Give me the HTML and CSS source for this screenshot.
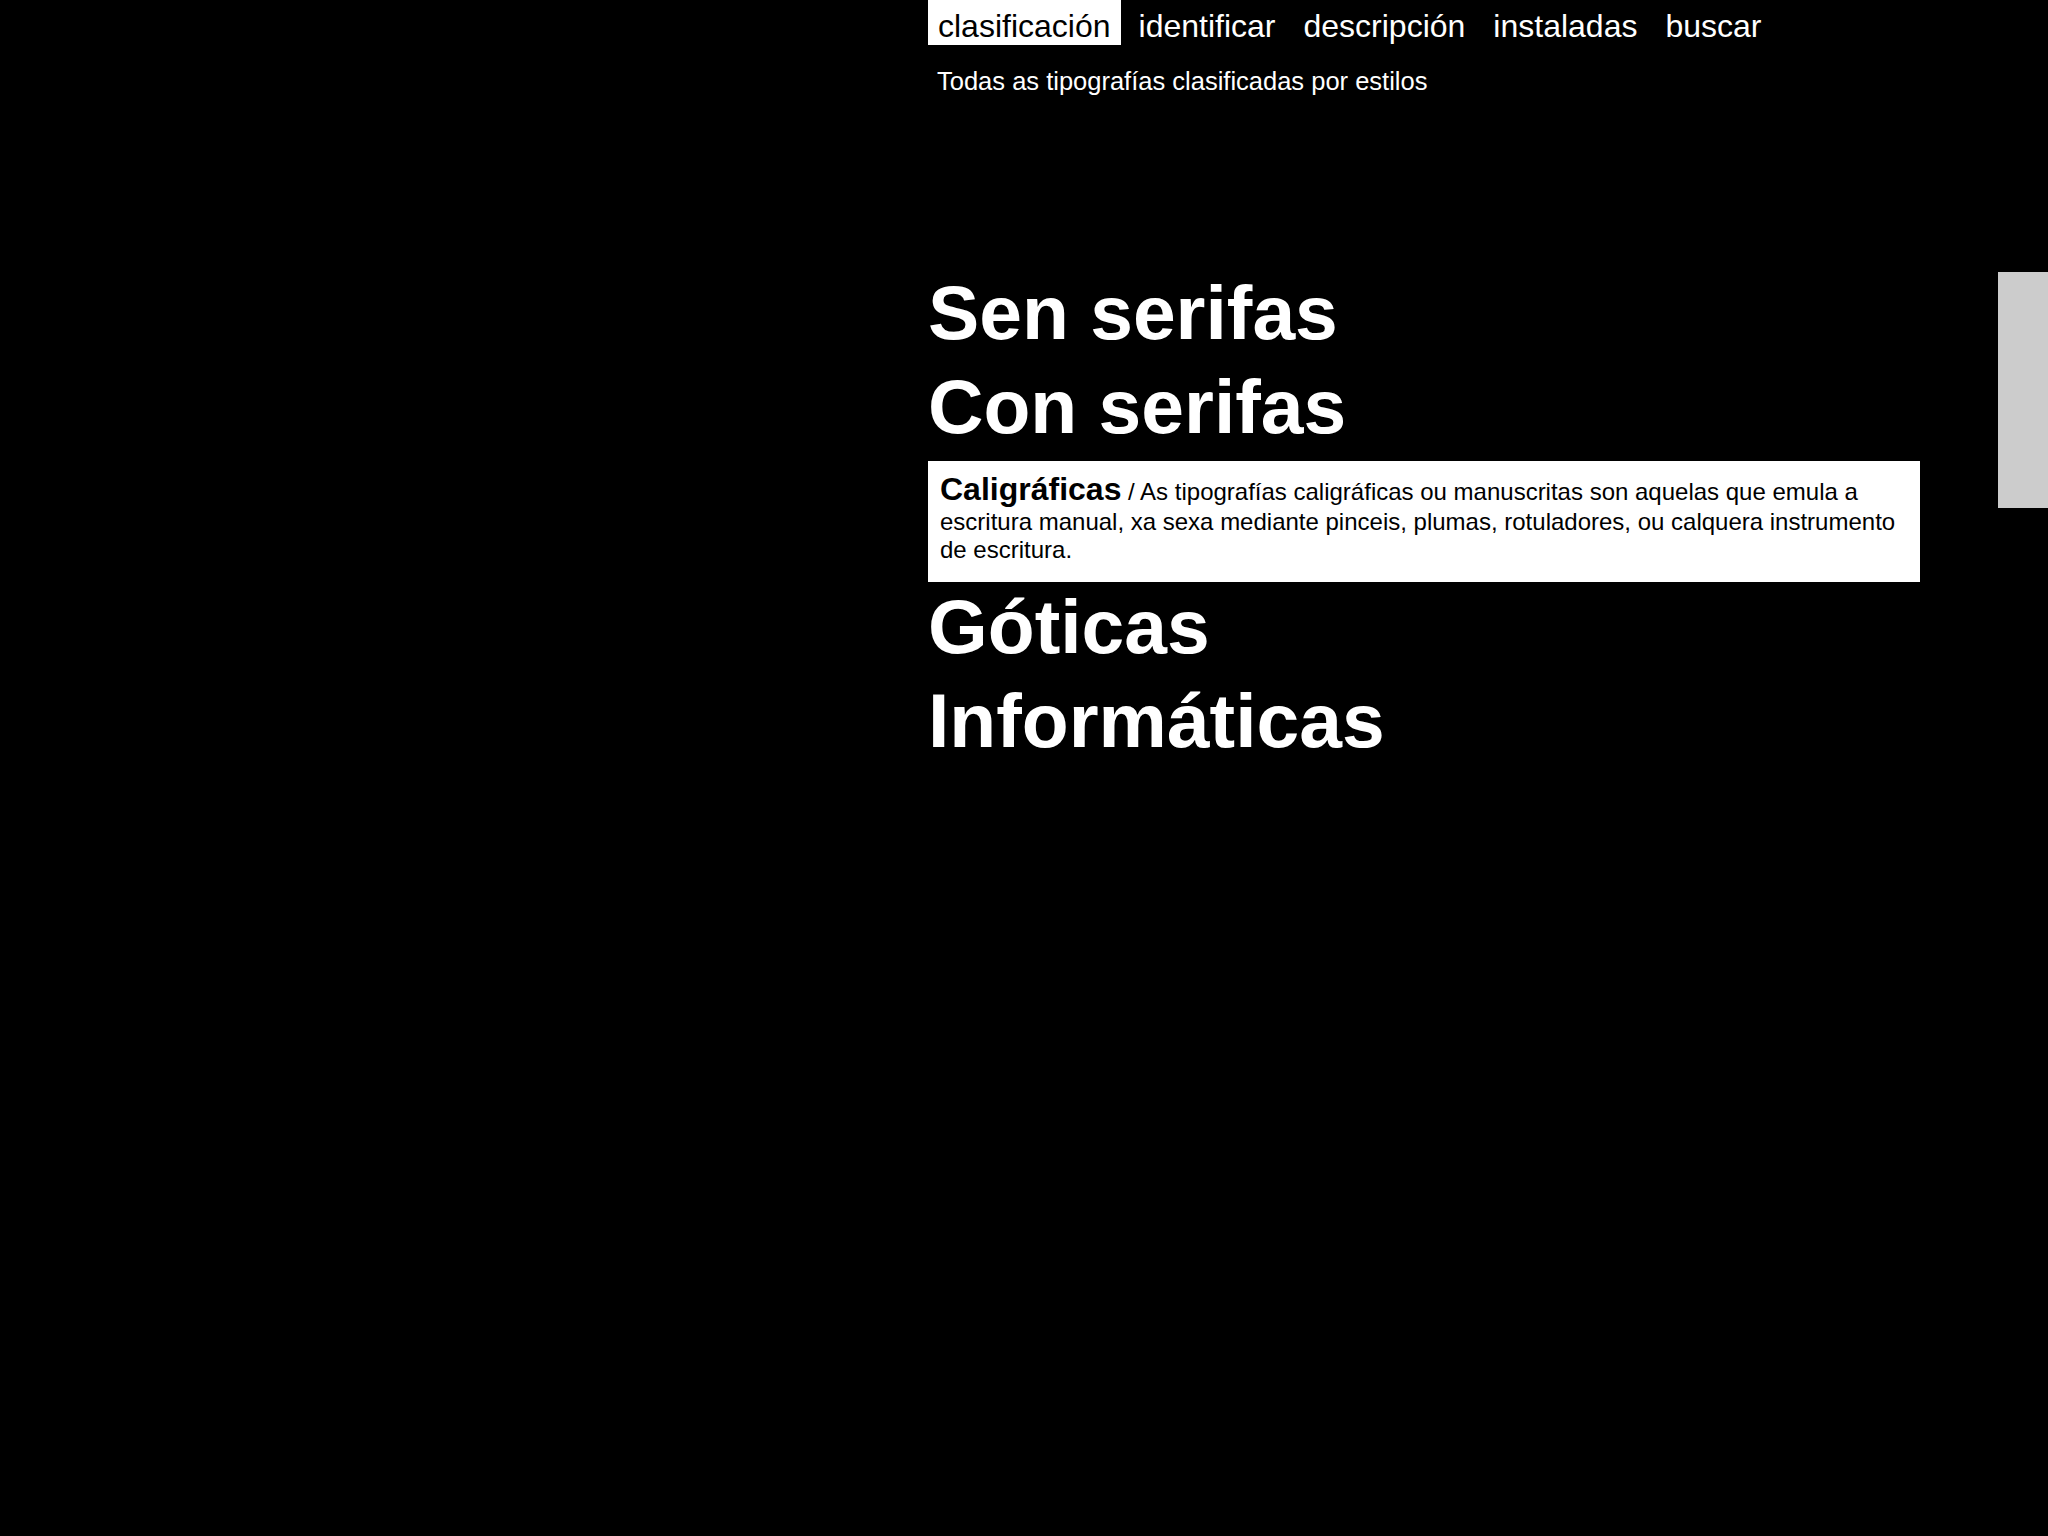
FILE: index.html
```html
<!DOCTYPE html>
<html lang="gl">
<head>
<meta charset="utf-8">
<title>Clasificación de tipografías</title>
<link rel="stylesheet" href="styles.css">
</head>
<body>
<div class="page">
  <nav class="nav">
    <a class="nav-item active" href="#">clasificación</a>
    <a class="nav-item" href="#">identificar</a>
    <a class="nav-item" href="#">descripción</a>
    <a class="nav-item" href="#">instaladas</a>
    <a class="nav-item" href="#">buscar</a>
  </nav>
  <p class="subtitle">Todas as tipografías clasificadas por estilos</p>
  <ul class="styles">
    <li class="style-item">Sen serifas</li>
    <li class="style-item">Con serifas</li>
    <li class="style-item open">
      <p class="open-text"><strong class="open-title">Caligráficas</strong> / As tipografías caligráficas ou manuscritas son aquelas que emula a escritura manual, xa sexa mediante pinceis, plumas, rotuladores, ou calquera instrumento de escritura.</p>
    </li>
    <li class="style-item">Góticas</li>
    <li class="style-item">Informáticas</li>
  </ul>
</div>
<div class="side-tab"></div>
</body>
</html>
```

FILE: styles.css
```css
html {
  background: #000;
}

body {
  margin: 0;
  background: #000;
  color: #fff;
  font-family: "Liberation Sans", Arial, sans-serif;
  min-height: 1536px;
}

.page {
  margin-left: 928px;
  width: 992px;
}

.nav {
  display: flex;
  gap: 8px;
}

.nav-item {
  display: block;
  padding: 8px 10px 0;
  font-size: 32px;
  line-height: 37px;
  color: #fff;
  text-decoration: none;
}

.nav-item.active {
  background: #fff;
  color: #000;
}

.subtitle {
  margin: 22px 0 0;
  padding-left: 9px;
  font-size: 25.5px;
  line-height: normal;
}

.styles {
  list-style: none;
  margin: 172px 0 0;
  padding: 0;
}

.style-item {
  font-size: 76.8px;
  font-weight: bold;
  line-height: 88px;
  padding-bottom: 6px;
  white-space: nowrap;
}

.style-item.open {
  margin-top: 5px;
  background: #fff;
  color: #000;
  font-size: 24px;
  font-weight: normal;
  line-height: normal;
  white-space: normal;
  padding: 10px 12px 18px;
}

.open-text {
  margin: 0;
}

.open-title {
  font-size: 32px;
  font-weight: bold;
}

.side-tab {
  position: fixed;
  right: 0;
  top: 272px;
  width: 50px;
  height: 236px;
  background: #cccccc;
}
```
